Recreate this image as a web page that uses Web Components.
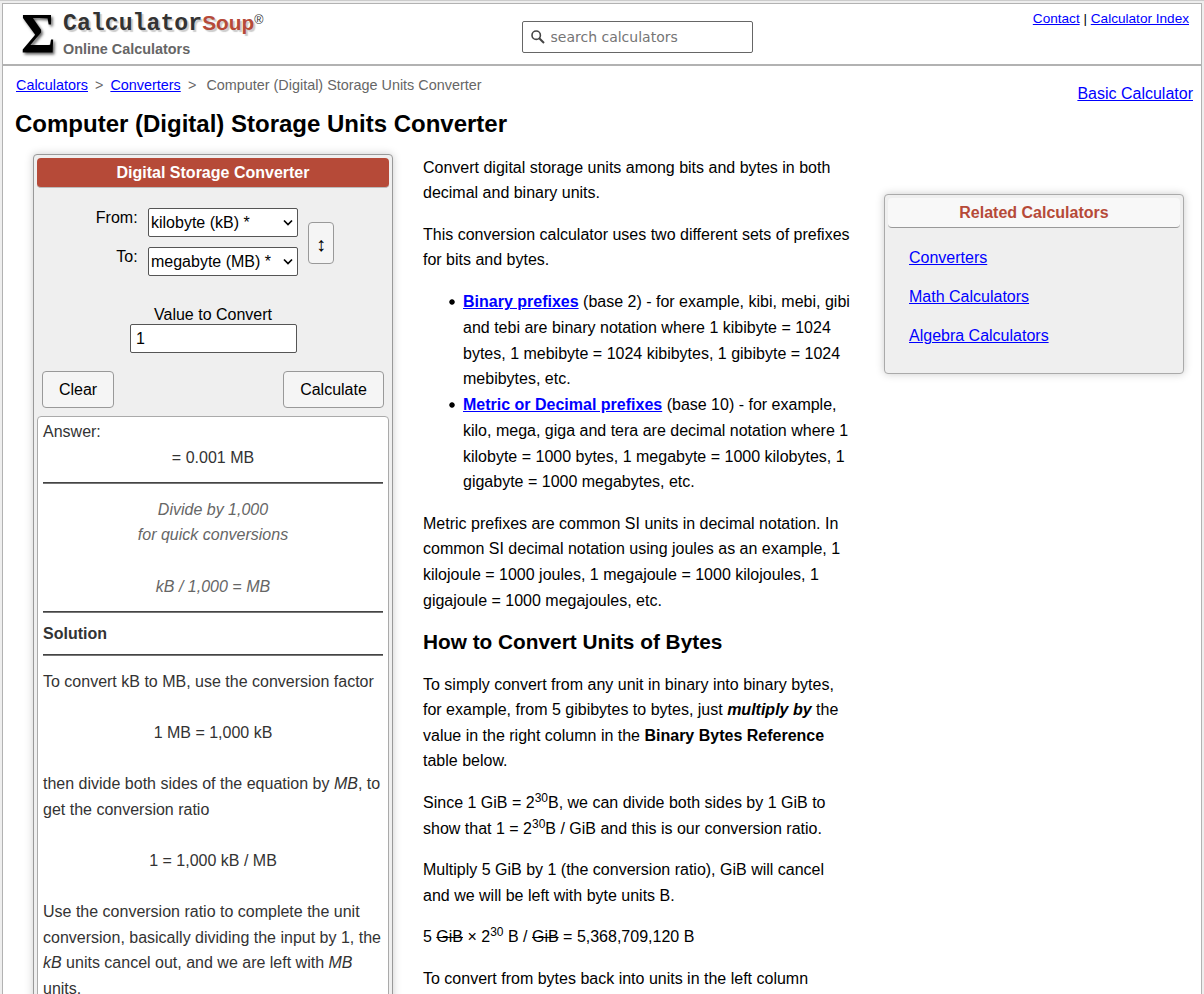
<!DOCTYPE html>
<html lang="en">
<head>
<meta charset="utf-8">
<title>Computer (Digital) Storage Units Converter</title>
<style>
html{height:100%;overflow:hidden}
body{margin:0;height:994px;overflow:hidden;background:#eee;font:16px/25.6px "Liberation Sans",Arial,sans-serif;color:#000}
</style>
</head>
<body>
<calc-page></calc-page>
<script>
const define = (name, html, setup) => {
  const t = document.createElement('template');
  t.innerHTML = html;
  customElements.define(name, class extends HTMLElement {
    constructor() {
      super();
      this.attachShadow({mode: 'open'}).append(t.content.cloneNode(true));
    }
    connectedCallback() {
      if (setup) setup(this);
    }
  });
};

define('site-logo', `
<style>
:host{display:flex;margin-left:18px;color:#333;white-space:nowrap}
.sigma{width:42px;font:bold 57px/57px "Liberation Serif",serif;color:#000;text-shadow:2px 2px 3px #666;margin-top:1px}
.sigma span{display:inline-block;transform:scaleX(.93);transform-origin:0 0}
.name{height:29px;line-height:36px;margin-top:1px}
.calc{font:bold 23.2px/36px "Liberation Mono",monospace;text-shadow:2px 2px 1px #ccc}
.soup{font-weight:bold;font-size:20.8px;color:#b64a38;text-shadow:2px 2px 1px #ccc}
.reg{font-size:12.5px;vertical-align:6px;line-height:0}
.tag{font-weight:bold;font-size:14.4px;line-height:30px;color:#666}
</style>
<div class="sigma"><span>Σ</span></div>
<div><div class="name"><span class="calc">Calculator</span><span class="soup">Soup</span><span class="reg">®</span></div><div class="tag">Online Calculators</div></div>`);

define('site-search', `
<style>
:host{display:flex;box-sizing:border-box;width:231px;height:32px;border:1px solid #666;border-radius:2px;background:#fff;align-items:center;padding-left:8px}
svg{display:block;flex:none;margin-right:5.5px}
input{border:0;outline:0;padding:0;width:190px;font:14px "DejaVu Sans",sans-serif;background:none}
input::placeholder{color:#757575}
</style>
<svg width="14" height="14" viewBox="0 0 14 14" fill="none" stroke="#444"><circle cx="5.2" cy="5.2" r="4.2" stroke-width="1.6"/><path d="M8.2 8.2L13 13" stroke-width="2"/></svg>
<input placeholder="search calculators">`);

define('site-header', `
<style>
:host{display:flex;height:60px;border-bottom:2px solid #b2b2b2;background:#fff}
.left{width:519px}
site-search{margin-top:17px}
nav{margin-left:auto;margin-right:12px;font-size:13.6px;line-height:20px;padding-top:5px}
a{color:#00f}
</style>
<div class="left"><site-logo></site-logo></div>
<site-search></site-search>
<nav><a href="#">Contact</a> | <a href="#">Calculator Index</a></nav>`);

define('page-heading', `
<style>
:host{display:flex;justify-content:space-between;height:89px}
a{color:#00f}
.crumbs{font-size:14.4px;line-height:20px;color:#666;padding:9px 0 0 13px;white-space:pre}
h1{font-size:24px;line-height:32px;margin:13px 0 0 12px}
.basic{padding:15px 8px 0 0}
</style>
<div><div class="crumbs"><a href="#">Calculators</a><span style="margin:0 7px">&gt;</span><a href="#">Converters</a><span style="margin:0 10px 0 7.2px">&gt;</span>Computer (Digital) Storage Units Converter</div>
<h1>Computer (Digital) Storage Units Converter</h1></div>
<div class="basic"><a href="#">Basic Calculator</a></div>`);

define('unit-select', `
<style>
:host{display:flex;height:39px}
label{width:100.6px;text-align:right;line-height:20px;margin-right:10.4px}
.box{display:grid;width:150px;height:29px}
select,svg{grid-area:1/1}
select{appearance:none;box-sizing:border-box;width:150px;height:29px;border:1px solid #555;border-radius:2px;background:#fff;color:#000;font:16px "Liberation Sans",Arial,sans-serif;padding:0 0 0 2px;margin:0}
svg{justify-self:end;align-self:center;margin-right:5px;pointer-events:none}
</style>
<label><slot></slot></label><div class="box"><select><option></option></select><svg width="10" height="7" viewBox="0 0 10 7" fill="none" stroke="#000" stroke-width="1.7"><path d="M1 1.5L5 5.5L9 1.5"/></svg></div>`,
el => { el.shadowRoot.querySelector('option').textContent = el.getAttribute('value'); });

define('soup-button', `
<style>
:host{display:flex;box-sizing:border-box;align-items:center;justify-content:center;height:37px;background:#f5f5f5;border:1px solid #999;border-radius:4px}
</style><slot></slot>`);

define('answer-box', `
<style>
:host{display:block;box-sizing:border-box;height:640px;background:#fff;border:1px solid #aaa;border-radius:4px 4px 0 0;color:#333;padding:2.4px 5px 0;margin:8px 0 0}
hr{border:0;height:2px;margin:11.6px 0 12.6px;background:linear-gradient(#444 50%,#777 50%)}
.c{text-align:center}.q{color:#666;font-style:italic}
hr.s{margin:12px 0 8px}hr.t{margin:7.6px 0 12.4px}
</style>
<div>Answer:</div><div class="c">= 0.001 MB</div>
<hr>
<div class="c q">Divide by 1,000<br>for quick conversions<br><br>kB / 1,000 = MB</div>
<hr class="s">
<div><b>Solution</b></div>
<hr class="t">
<div>To convert kB to MB, use the conversion factor</div><br>
<div class="c">1 MB = 1,000 kB</div><br>
<div>then divide both sides of the equation by <i>MB</i>, to get the conversion ratio</div><br>
<div class="c">1 = 1,000 kB / MB</div><br>
<div>Use the conversion ratio to complete the unit conversion, basically dividing the input by 1, the <i>kB</i> units cancel out, and we are left with <i>MB</i> units.</div>`);

define('storage-converter', `
<style>
:host{display:block;box-sizing:border-box;width:360px;height:900px;background:#efefef;border:1px solid #999;border-radius:4px;box-shadow:0 0 8px #ccc;padding:3px}
.title{height:29px;background:#b64a38;border-bottom:1px solid #bbb;border-radius:4px;color:#fff;font-weight:bold;text-align:center;line-height:30px}
.units{display:flex;margin-top:20px;height:90px}
.swap{width:26px;height:42px;margin:14px 0 0 10px;padding-top:4px;font-size:20px}
.val{box-sizing:border-box;margin:0 0 0 93px;width:167px;text-align:center;line-height:18px;padding-top:8px}
.val span{margin-right:1px}
.val input{display:block;box-sizing:border-box;width:167px;height:29px;margin:0;border:1px solid #555;border-radius:2px;padding:1px 5px;font:16px "Liberation Sans",Arial,sans-serif}
.btns{display:flex;justify-content:space-between;padding:18px 5px 0}
</style>
<div class="title">Digital Storage Converter</div>
<div class="units"><div><unit-select value="kilobyte (kB) *">From:</unit-select><unit-select value="megabyte (MB) *">To:</unit-select></div><soup-button class="swap">↕</soup-button></div>
<div class="val"><span>Value to Convert</span><input value="1"></div>
<div class="btns"><soup-button style="width:72px">Clear</soup-button><soup-button style="width:101px">Calculate</soup-button></div>
<answer-box></answer-box>`);

define('article-body', `
<style>
:host{display:block;width:430px}
p{margin:0 0 16px}
ul{margin:0 0 16px;padding:.4px 0 0 40px;list-style:none}
li{position:relative}
li::before{content:"";position:absolute;left:-14px;top:10px;width:6px;height:6px;background:radial-gradient(circle,#000 2.3px,transparent 3.1px)}
li+li{margin-top:.6px}
a{color:#00f;font-weight:bold}
h2{font-size:20.8px;line-height:26px;margin:0 0 16.6px}
sup{font-size:12px;line-height:0}
</style>
<p>Convert digital storage units among bits and bytes in both decimal and binary units.</p>
<p>This conversion calculator uses two different sets of prefixes for bits and bytes.</p>
<ul><li><a href="#">Binary prefixes</a> (base 2) - for example, kibi, mebi, gibi and tebi are binary notation where 1 kibibyte = 1024 bytes, 1 mebibyte = 1024 kibibytes, 1 gibibyte = 1024 mebibytes, etc.</li>
<li><a href="#">Metric or Decimal prefixes</a> (base 10) - for example, kilo, mega, giga and tera are decimal notation where 1 kilobyte = 1000 bytes, 1 megabyte = 1000 kilobytes, 1 gigabyte = 1000 megabytes, etc.</li></ul>
<p>Metric prefixes are common SI units in decimal notation. In common SI decimal notation using joules as an example, 1 kilojoule = 1000 joules, 1 megajoule = 1000 kilojoules, 1 gigajoule = 1000 megajoules, etc.</p>
<h2>How to Convert Units of Bytes</h2>
<p>To simply convert from any unit in binary into binary bytes, for example, from 5 gibibytes to bytes, just <b><i>multiply by</i></b> the value in the right column in the <b>Binary Bytes Reference</b> table below.</p>
<p>Since 1 GiB = 2<sup>30</sup>B, we can divide both sides by 1 GiB to show that 1 = 2<sup>30</sup>B / GiB and this is our conversion ratio.</p>
<p>Multiply 5 GiB by 1 (the conversion ratio), GiB will cancel and we will be left with byte units B.</p>
<p>5 <s>GiB</s> × 2<sup>30</sup> B / <s>GiB</s> = 5,368,709,120 B</p>
<p>To convert from bytes back into units in the left column</p>`);

define('related-links', `
<style>
:host{display:block;box-sizing:border-box;width:300px;height:180px;background:#efefef;border:1px solid #aaa;border-radius:4px;box-shadow:0 0 8px #ccc;padding:3px}
.title{height:29px;background:#f8f8f8;border-bottom:1px solid #999;border-radius:4px;color:#b64a38;font-weight:bold;text-align:center;line-height:30px}
.links{display:grid;row-gap:13px;padding:17px 21px}
a{color:#00f;line-height:26px;justify-self:start}
</style>
<div class="title">Related Calculators</div>
<div class="links"><a href="#">Converters</a><a href="#">Math Calculators</a><a href="#">Algebra Calculators</a></div>`);

define('calc-page', `
<style>
:host{display:block;border-top:1px solid #ccc;padding:2px 2px 0}
main{background:#fff;border:1px solid #b2b2b2;border-bottom:0;height:991px;box-sizing:border-box;overflow:hidden}
.cols{display:flex}
storage-converter{margin:-1px 0 0 30px;flex:none}
article-body{margin:-.4px 0 0 30px;flex:none}
related-links{margin:39px 0 0 31px;flex:none}
</style>
<main><site-header></site-header><page-heading></page-heading>
<div class="cols"><storage-converter></storage-converter><article-body></article-body><related-links></related-links></div></main>`);
</script>
</body>
</html>
